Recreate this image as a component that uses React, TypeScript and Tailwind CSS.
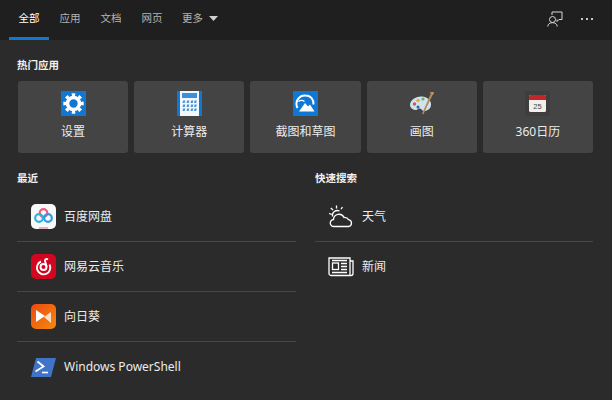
import React from 'react';

const FONT = { fontFamily: '"Noto Sans", "Noto Sans CJK SC", "Liberation Sans", sans-serif' };

const tabs = ['全部', '应用', '文档', '网页'];

// ---- app icons ----

const SettingsIcon = () => (
  <svg width="25" height="25" viewBox="0 0 25 25" fill="none" stroke="#fff">
    <rect width="25" height="25" fill="#0f78d4" stroke="none" />
    <circle cx="12.500" cy="12.500" r="6" strokeWidth="3.600" />
    <circle cx="12.500" cy="12.500" r="8.800" strokeWidth="2.800" pathLength="16" strokeDasharray="1 1" strokeDashoffset="0.500" />
  </svg>
);

const CalculatorIcon = () => (
  <svg width="25" height="25" viewBox="0 0 25 25">
    <rect width="25" height="25" fill="#0f78d4" />
    <rect x="3" y="0" width="19" height="25" fill="#f2f7fb" />
    <rect x="5" y="2" width="15" height="5" fill="#3f8fd6" />
    {[9.500, 13.500, 17.500].map((y) =>
      [5.500, 9.500, 13.500, 17].map((x) => (
        <path key={`${x}-${y}`} d={`M${x + 0.6} ${y}h2.200l-.6 2.500h-2.200z`} fill="#4a94d8" />
      ))
    )}
  </svg>
);

const SnipIcon = () => (
  <svg width="25" height="25" viewBox="0 0 25 25">
    <rect width="25" height="25" fill="#0f78d4" />
    <path d="M4.500 17a8.500 8.500 0 0 1 8-12.500c5 0 8.500 4 8 9" fill="none" stroke="#fff" strokeWidth="2" />
    <path d="M6 20.500l6-8.500 3 3.500 2-2 4.500 7z" fill="#fff" />
    <path d="M5.500 10.500c2-1.500 4-1.500 6 0" fill="none" stroke="#fff" strokeWidth="1.300" />
  </svg>
);

const PaintIcon = () => (
  <svg width="26" height="26" viewBox="0 0 26 26">
    <path d="M1 14c0-5 6-9 12-8.500 6 .5 9 4 9 8s-3 6-6 6.500c-3 .5-3-2-5-2.500-2-.5-3 2-5 1.500S1 17 1 14z" fill="#cfe2ee" />
    <circle cx="9" cy="9.500" r="1.800" fill="#e0b23a" />
    <circle cx="14" cy="8" r="1.600" fill="#6cb14f" />
    <circle cx="5.500" cy="13" r="1.700" fill="#d2574e" />
    <circle cx="9" cy="16" r="1.500" fill="#2f5fa8" />
    <path d="M22 2l1.800 1.500-9.500 20-1.300-.8z" fill="#b08a5a" />
    <path d="M20.500 1.500l3.500 2.500 1-3z" fill="#d9a066" />
  </svg>
);

const CalendarIcon = () => (
  <div className="w-[25px] h-[25px] bg-[#3e3e3e] flex items-center justify-center">
    <svg width="17" height="17" viewBox="0 0 17 17">
      <rect width="17" height="17" rx="1.500" fill="#f1efe8" />
      <path d="M0 1.500A1.500 1.500 0 0 1 1.500 0h14A1.500 1.500 0 0 1 17 1.500V5H0z" fill="#c5242a" />
      <text x="8.500" y="13.500" textAnchor="middle" fontSize="7.500" fill="#444" fontFamily="Liberation Sans">25</text>
    </svg>
  </div>
);

const BaiduIcon = () => (
  <svg width="25" height="25" viewBox="0 0 25 25">
    <rect width="25" height="25" rx="5" fill="#f6f8fa" />
    <circle cx="12.500" cy="9" r="3.800" fill="none" stroke="#e8607c" strokeWidth="2.200" />
    <circle cx="8" cy="14" r="3.800" fill="none" stroke="#2fb4d8" strokeWidth="2.200" />
    <circle cx="17" cy="14" r="3.800" fill="none" stroke="#2f9be0" strokeWidth="2.200" />
    <rect x="8" y="23.500" width="9" height="1" fill="#d0707f" />
  </svg>
);

const NeteaseIcon = () => (
  <svg width="25" height="25" viewBox="0 0 25 25" fill="none" stroke="#fff" strokeWidth="1.900">
    <rect width="25" height="25" rx="5" fill="#d2061f" stroke="none" />
    <path d="M10 7.500a6.700 6.700 0 1 0 8.500 3" />
    <circle cx="12.500" cy="13" r="3" />
    <path d="M15.500 13c0-2-1.500-5-1.500-6.500 0-1.500 1.500-2 3-1" />
  </svg>
);

const SunflowerIcon = () => (
  <svg width="25" height="25" viewBox="0 0 25 25">
    <defs>
      <linearGradient id="sun" x1="0" y1="0" x2="1" y2="1">
        <stop offset="0" stopColor="#ec4a12" />
        <stop offset="1" stopColor="#f58a0c" />
      </linearGradient>
    </defs>
    <rect width="25" height="25" rx="5" fill="url(#sun)" />
    <path d="M5 6l9 6-9 6z" fill="#fff" />
    <path d="M20 8v11l-7-6z" fill="#fde0c8" />
  </svg>
);

const PowerShellIcon = () => (
  <svg width="25" height="19" viewBox="0 0 25 19">
    <path d="M5 0h20l-5 19H0z" fill="#3f74c8" />
    <path d="M6.500 3.500l6 5-8 5" fill="none" stroke="#fff" strokeWidth="1.800" />
    <path d="M11 14.500h6" stroke="#fff" strokeWidth="1.600" />
  </svg>
);

const WeatherIcon = () => (
  <svg width="26" height="26" viewBox="0 0 26 26" fill="none" stroke="#fff" strokeWidth="1.300">
    <path d="M6 22.500a3.500 3.500 0 0 1-.5-7 5.500 5.500 0 0 1 10.500-2 4.500 4.500 0 0 1 4.500 2.200 3.500 3.500 0 0 1 .5 6.800z" />
    <path d="M4.500 12.500a5 5 0 0 1 7-5.500" />
    <path d="M8.500 1.500v3M1 9.500l2.800.8M2.800 4l2.200 2M14.500 3l-1.500 2.200" />
  </svg>
);

const NewsIcon = () => (
  <svg width="26" height="20" viewBox="0 0 26 20" fill="none" stroke="#fff" strokeWidth="1.300">
    <path d="M1 1h21v17.500H3a2 2 0 0 1-2-2zM22 4h3v12.500a2 2 0 0 1-2 2h-1" />
    <rect x="4.500" y="6" width="6" height="6.500" />
    <path d="M4 3.500h15M13 6.500h6M13 9.500h6M13 12.500h6M4 15.500h15" />
  </svg>
);

// ---- data ----

const hotApps = [
  { name: '设置', icon: <SettingsIcon /> },
  { name: '计算器', icon: <CalculatorIcon /> },
  { name: '截图和草图', icon: <SnipIcon /> },
  { name: '画图', icon: <PaintIcon /> },
  { name: '360日历', icon: <CalendarIcon /> },
];

const recent = [
  { name: '百度网盘', icon: <BaiduIcon /> },
  { name: '网易云音乐', icon: <NeteaseIcon /> },
  { name: '向日葵', icon: <SunflowerIcon /> },
  { name: 'Windows PowerShell', icon: <PowerShellIcon /> },
];

const quick = [
  { name: '天气', icon: <WeatherIcon /> },
  { name: '新闻', icon: <NewsIcon /> },
];

const ListRow: React.FC<{ name: string; icon: React.ReactNode; last: boolean }> = ({ name, icon, last }) => (
  <div className={`h-[50px] flex items-center gap-[8px] pl-[13px] border-[#474747] ${last ? '' : 'border-b'}`}>
    <div className="w-[26px] flex items-center justify-center shrink-0">{icon}</div>
    <span className="text-[12px] text-[#ececec] whitespace-nowrap">{name}</span>
  </div>
);

export default function App() {
  return (
    <div className="w-[612px] h-[400px] overflow-hidden bg-[#2b2b2b] flex flex-col" style={FONT}>
      {/* Header */}
      <div className="h-[40px] bg-[#1f1f1f] flex items-stretch justify-between shrink-0">
        <div className="flex items-stretch pl-[9px]">
          {tabs.map((tab, i) => (
            <div
              key={tab}
              className={`w-[40px] mr-[1px] flex items-center justify-center text-[10.500px] border-b-[3px] ${
                i === 0 ? 'text-white border-[#0f78d4]' : 'text-[#b4b4b4] border-transparent'
              }`}
            >
              {tab}
            </div>
          ))}
          <div className="flex items-center gap-[6px] pl-[9px] pb-[3px] text-[10.500px] text-[#b4b4b4]">
            更多
            <svg width="9" height="5" viewBox="0 0 9 5">
              <path d="M0 0h9L4.500 5z" fill="#d0d0d0" />
            </svg>
          </div>
        </div>
        <div className="flex items-center pr-[19px] gap-[18px] pb-[3px]">
          <svg width="16" height="16" viewBox="0 0 16 16" fill="none" stroke="#d8d8d8" strokeWidth="1">
            <path d="M5 4V1h10v7.500h-3l-2 2v-2" />
            <circle cx="5.500" cy="8.500" r="3" />
            <path d="M0.800 15.500c0-2.500 2-3.800 4.700-3.800s4.700 1.300 4.700 3.800" />
          </svg>
          <div className="flex items-center gap-[3px]">
            <span className="w-[2px] h-[2px] bg-[#c8c8c8]" />
            <span className="w-[2px] h-[2px] bg-[#c8c8c8]" />
            <span className="w-[2px] h-[2px] bg-[#c8c8c8]" />
          </div>
        </div>
      </div>

      {/* Body */}
      <div className="flex-1 pl-[18px] pr-[19px]">
        <div className="h-[41px] -ml-[1px] flex items-center pt-[11px] text-[10.500px] font-bold text-[#f0f0f0]">热门应用</div>
        <div className="grid grid-cols-5 gap-[6px]">
          {hotApps.map((app) => (
            <div key={app.name} className="h-[72px] rounded-[3px] bg-[#444444] flex flex-col items-center pt-[10px]">
              <div className="h-[25px] flex items-center justify-center">{app.icon}</div>
              <div className="mt-[4px] text-[12px] leading-[24px] text-[#ececec] whitespace-nowrap">{app.name}</div>
            </div>
          ))}
        </div>

        <div className="flex gap-[19px] mt-[17px] -ml-[1px]">
          <div className="w-[279px]">
            <div className="h-[18px] flex items-center text-[10.500px] font-bold text-[#f0f0f0]">最近</div>
            <div className="mt-[4px]">
              {recent.map((item, i) => (
                <ListRow key={item.name} {...item} last={i === recent.length - 1} />
              ))}
            </div>
          </div>
          <div className="w-[278px]">
            <div className="h-[18px] flex items-center text-[10.500px] font-bold text-[#f0f0f0]">快速搜索</div>
            <div className="mt-[4px]">
              {quick.map((item, i) => (
                <ListRow key={item.name} {...item} last={i === quick.length - 1} />
              ))}
            </div>
          </div>
        </div>
      </div>
    </div>
  );
}
